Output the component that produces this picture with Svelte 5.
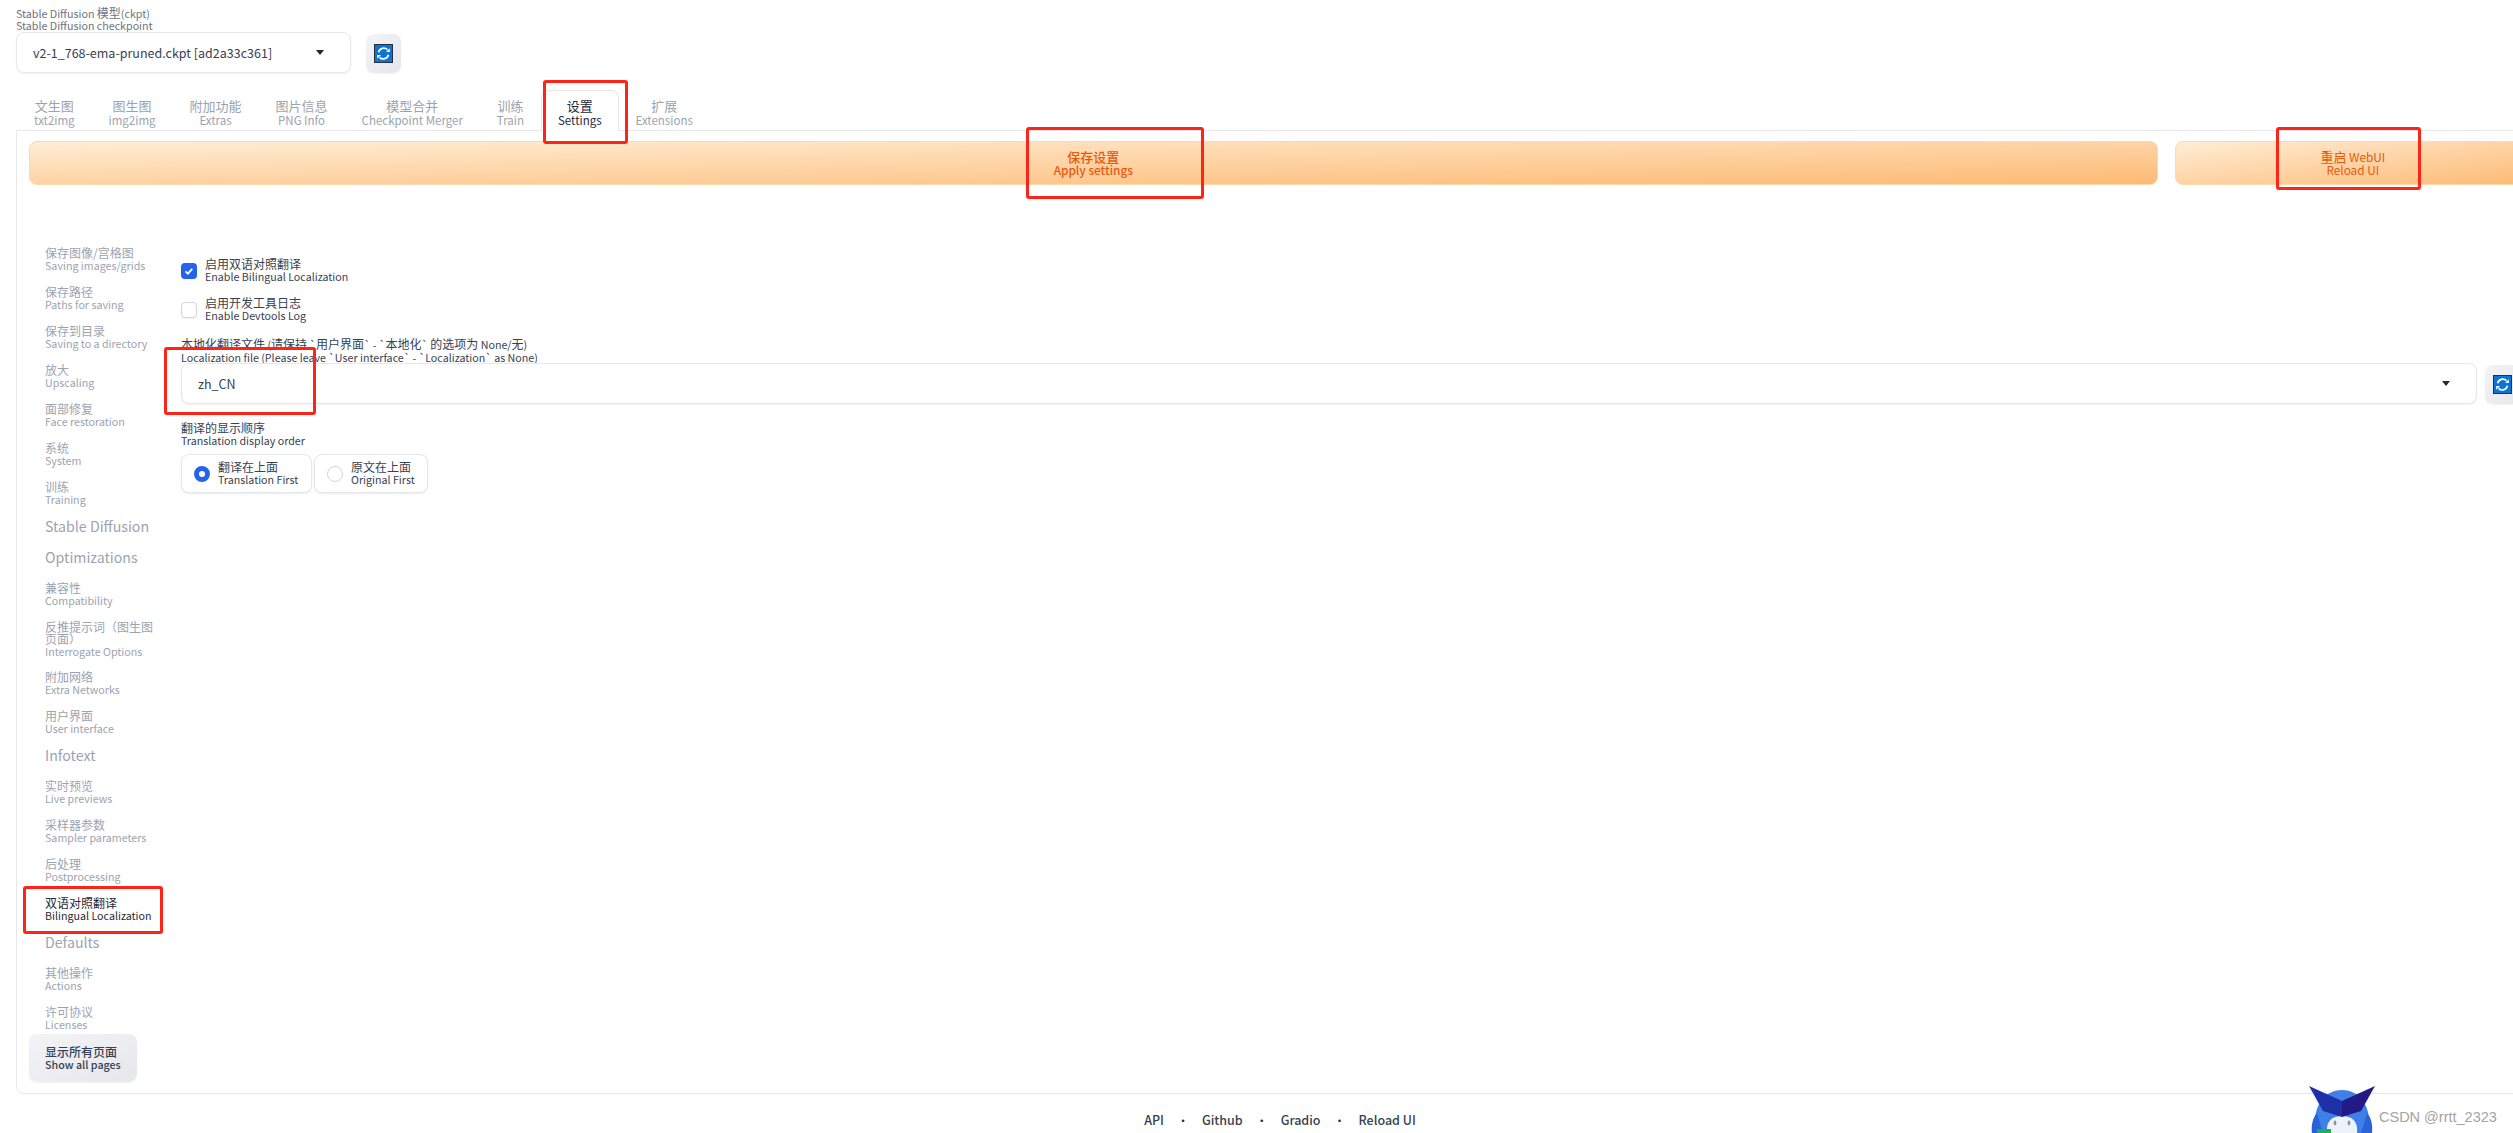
<script>
  const tabs = [
    ['文生图', 'txt2img'], ['图生图', 'img2img'], ['附加功能', 'Extras'], ['图片信息', 'PNG Info'],
    ['模型合并', 'Checkpoint Merger'], ['训练', 'Train'], ['设置', 'Settings', true], ['扩展', 'Extensions']
  ];
  const nav = [
    { zh: '保存图像/宫格图', en: 'Saving images/grids' },
    { zh: '保存路径', en: 'Paths for saving' },
    { zh: '保存到目录', en: 'Saving to a directory' },
    { zh: '放大', en: 'Upscaling' },
    { zh: '面部修复', en: 'Face restoration' },
    { zh: '系统', en: 'System' },
    { zh: '训练', en: 'Training' },
    { head: 'Stable Diffusion' },
    { head: 'Optimizations' },
    { zh: '兼容性', en: 'Compatibility' },
    { zh: '反推提示词（图生图页面）', en: 'Interrogate Options', tight: true },
    { zh: '附加网络', en: 'Extra Networks' },
    { zh: '用户界面', en: 'User interface' },
    { head: 'Infotext' },
    { zh: '实时预览', en: 'Live previews' },
    { zh: '采样器参数', en: 'Sampler parameters' },
    { zh: '后处理', en: 'Postprocessing' },
    { zh: '双语对照翻译', en: 'Bilingual Localization', active: true },
    { head: 'Defaults' },
    { zh: '其他操作', en: 'Actions' },
    { zh: '许可协议', en: 'Licenses' }
  ];
  const links = ['API', 'Github', 'Gradio', 'Reload UI'];
</script>

{#snippet refresh()}
  <button class="refresh" type="button" aria-label="refresh">
    <svg width="19" height="19" viewBox="0 0 19 19">
      <rect x="0.5" y="0.5" width="18" height="18" fill="#0a74d8" stroke="#2b2f36" />
      <path d="M4.6 8.2A5.2 5.2 0 0 1 13.4 5.7" fill="none" stroke="#fff" stroke-width="1.7" />
      <path d="M14.4 10.8A5.2 5.2 0 0 1 5.6 13.3" fill="none" stroke="#fff" stroke-width="1.7" />
      <path d="M12 8h3.8V4.2zM7 11H3.2v3.8z" fill="#fff" />
    </svg>
  </button>
{/snippet}

<div class="page">
  <div class="model">
    <div class="lbl top-lbl">
      <span>Stable Diffusion <b class="z">模型</b>(ckpt)</span>
      <span>Stable Diffusion checkpoint</span>
    </div>
    <div class="model-row">
      <div class="select small">
        <span>v2-1_768-ema-pruned.ckpt [ad2a33c361]</span>
        <i class="caret"></i>
      </div>
      {@render refresh()}
    </div>
  </div>

  <div class="tabs">
    {#each tabs as t}
      <div class="tab" class:on={t[2]}>
        <span class="z">{t[0]}</span>
        <span>{t[1]}</span>
      </div>
    {/each}
  </div>

  <div class="panel">
    <div class="actions">
      <button class="primary apply" type="button"><span class="z">保存设置</span><span>Apply settings</span></button>
      <button class="primary reload" type="button"><span><b class="z">重启</b> WebUI</span><span>Reload UI</span></button>
    </div>

    <div class="body">
      <aside class="side">
        {#each nav as n}
          {#if n.head}
            <div class="nav-head">{n.head}</div>
          {:else}
            <div class="nav-item" class:active={n.active} class:tight={n.tight}>
              <span class="z">{n.zh}</span>
              <span class="en">{n.en}</span>
            </div>
          {/if}
        {/each}
        <button class="show-all" type="button"><span class="z">显示所有页面</span><span>Show all pages</span></button>
      </aside>

      <section class="content">
        <div class="check-row">
          <span class="box checked">
            <svg width="16" height="16" viewBox="0 0 16 16"><path d="M4.5 8.3l2.4 2.3 4.4-4.8" fill="none" stroke="#fff" stroke-width="1.8" /></svg>
          </span>
          <div class="lbl"><span class="z">启用双语对照翻译</span><span>Enable Bilingual Localization</span></div>
        </div>
        <div class="check-row second">
          <span class="box"></span>
          <div class="lbl"><span class="z">启用开发工具日志</span><span>Enable Devtools Log</span></div>
        </div>

        <div class="lbl file-lbl">
          <span><b class="z">本地化翻译文件</b> (<b class="z">请保持</b> `<b class="z">用户界面</b>` - `<b class="z">本地化</b>` <b class="z">的选项为</b> None/<b class="z">无</b>)</span>
          <span>Localization file (Please leave `User interface` - `Localization` as None)</span>
        </div>
        <div class="file-row">
          <div class="select wide">
            <span>zh_CN</span>
            <i class="caret"></i>
          </div>
          {@render refresh()}
        </div>

        <div class="lbl order-lbl">
          <span class="z">翻译的显示顺序</span>
          <span>Translation display order</span>
        </div>
        <div class="radios">
          <div class="radio first">
            <span class="dot on"></span>
            <div class="lbl"><span class="z">翻译在上面</span><span>Translation First</span></div>
          </div>
          <div class="radio">
            <span class="dot"></span>
            <div class="lbl"><span class="z">原文在上面</span><span>Original First</span></div>
          </div>
        </div>
      </section>
    </div>
  </div>

  <footer class="footer">
    {#each links as l, i}
      {#if i > 0}<span class="sep">•</span>{/if}
      <span>{l}</span>
    {/each}
  </footer>

  <div class="red r-tab"></div>
  <div class="red r-apply"></div>
  <div class="red r-reload"></div>
  <div class="red r-file"></div>
  <div class="red r-nav"></div>

  <svg class="mascot" width="66" height="47" viewBox="0 0 66 47">
    <path d="M6 47V36C6 16 18 4 33 4s27 12 27 32v11z" fill="#3f7fe8" />
    <path d="M3 47c-1-8 1-16 5-20l6 20zM63 47c1-8-1-16-5-20l-6 20z" fill="#2a63d8" />
    <path d="M18 47c-1-8 2-17 15-17s16 9 15 17z" fill="#eef3fb" />
    <ellipse cx="26" cy="37" rx="1.4" ry="2.4" fill="#8b93a3" />
    <ellipse cx="40" cy="37" rx="1.4" ry="2.4" fill="#8b93a3" />
    <path d="M0 0L33 15V31L14 25z" fill="#1f2fa8" />
    <path d="M66 0L33 15V31L52 25z" fill="#241a86" />
    <rect x="8" y="43" width="14" height="4" fill="#16b35a" />
  </svg>
  <span class="mark">CSDN @rrtt_2323</span>
</div>

<style>
  :global(html), :global(body) {
    margin: 0;
    overflow: hidden;
    background: #fff;
  }
  .page {
    position: relative;
    box-sizing: border-box;
    width: 2560px;
    height: 1133px;
    padding: 7px 16px 0;
    font-family: "Noto Sans CJK SC", "Noto Sans", sans-serif;
    font-size: 10.7px;
    line-height: 12px;
    color: #374151;
    overflow: hidden;
  }
  .z {
    font-size: 12px;
    font-weight: inherit;
  }
  button {
    font-family: inherit;
    cursor: pointer;
  }
  .lbl {
    display: flex;
    flex-direction: column;
    gap: 1px;
    color: #374151;
    white-space: nowrap;
  }
  .top-lbl {
    color: #6b7280;
    gap: 0;
    height: 25px;
  }
  .model-row {
    display: flex;
    align-items: flex-start;
    gap: 15px;
  }
  .select {
    box-sizing: border-box;
    display: flex;
    align-items: center;
    justify-content: space-between;
    background: #fff;
    border: 1px solid #e5e7eb;
    border-radius: 8px;
    box-shadow: 0 1px 2px rgba(0, 0, 0, 0.06);
    font-size: 12.5px;
    color: #374151;
  }
  .small {
    width: 335px;
    height: 41px;
    padding: 0 26px 0 16px;
  }
  .caret {
    width: 0;
    height: 0;
    border-left: 4px solid transparent;
    border-right: 4px solid transparent;
    border-top: 5px solid #1f2937;
  }
  .refresh {
    box-sizing: border-box;
    display: flex;
    align-items: center;
    justify-content: center;
    flex: none;
    width: 35px;
    height: 39px;
    margin-top: 2px;
    padding: 0;
    border: 0;
    border-radius: 8px;
    background: linear-gradient(to bottom right, #f3f4f6, #e5e7eb);
    box-shadow: 0 1px 2px rgba(0, 0, 0, 0.05);
  }

  .tabs {
    display: flex;
    margin-top: 17px;
    padding-left: 1px;
    position: relative;
    z-index: 1;
  }
  .tab {
    box-sizing: border-box;
    display: flex;
    flex-direction: column;
    align-items: center;
    justify-content: center;
    gap: 2px;
    height: 41px;
    padding: 4px 16px 0;
    border: 1px solid transparent;
    border-bottom: 0;
    border-radius: 8px 8px 0 0;
    color: #9ca3af;
    font-size: 11.5px;
    white-space: nowrap;
  }
  .tab .z {
    font-size: 13px;
  }
  .tab.on {
    color: #1f2937;
    background: #fff;
    border-color: #e5e7eb;
  }

  .panel {
    box-sizing: border-box;
    height: 964px;
    margin-top: -1px;
    padding: 10px 12px 10px;
    border: 1px solid #e5e7eb;
    border-radius: 0 0 8px 8px;
  }
  .actions {
    display: flex;
    gap: 17px;
  }
  .primary {
    display: flex;
    flex-direction: column;
    align-items: center;
    justify-content: center;
    gap: 1px;
    height: 44px;
    padding: 0;
    border: 1px solid #fed7aa;
    border-radius: 8px;
    background: linear-gradient(to bottom right, #ffedd5, #fdba74);
    color: #ea580c;
    font-size: 11.8px;
    line-height: 12px;
  }
  .primary .z {
    font-size: 13px;
  }
  .apply {
    flex: 6;
    font-weight: 500;
  }
  .reload {
    flex: 1;
  }

  .body {
    display: flex;
    gap: 12px;
  }
  .side {
    box-sizing: border-box;
    flex: none;
    width: 140px;
    padding-top: 55px;
    display: flex;
    flex-direction: column;
  }
  .nav-item {
    display: flex;
    flex-direction: column;
    width: 116px;
    padding: 7px 0 7px 16px;
    color: #9ca3af;
  }
  .nav-item.tight {
    padding-bottom: 6px;
  }
  .nav-item .en {
    margin-top: 1px;
    white-space: nowrap;
  }
  .nav-item.active {
    color: #1f2937;
  }
  .nav-head {
    height: 26px;
    margin-bottom: 5px;
    padding-left: 16px;
    font-size: 14.2px;
    line-height: 26px;
    color: #9ca3af;
  }
  .show-all {
    display: flex;
    flex-direction: column;
    align-items: flex-start;
    justify-content: center;
    gap: 1px;
    box-sizing: border-box;
    width: 108px;
    height: 48px;
    margin-top: -4px;
    padding: 0 0 0 16px;
    border: 0;
    border-radius: 8px;
    background: linear-gradient(to bottom right, #f3f4f6, #e5e7eb);
    box-shadow: 0 1px 2px rgba(0, 0, 0, 0.05);
    color: #374151;
    font-size: 10.7px;
    line-height: 12px;
    font-weight: 500;
  }

  .content {
    flex: 1;
    min-width: 0;
    padding-top: 73px;
  }
  .check-row {
    display: flex;
    align-items: center;
    gap: 8px;
    height: 25px;
  }
  .check-row.second {
    margin-top: 14px;
  }
  .box {
    box-sizing: border-box;
    width: 16px;
    height: 16px;
    margin-top: 1px;
    border: 1px solid #d1d5db;
    border-radius: 4px;
    background: #fff;
    box-shadow: 0 1px 2px rgba(0, 0, 0, 0.05);
  }
  .box.checked {
    border: 0;
    background: #2563eb;
  }
  .box svg {
    display: block;
  }
  .file-lbl {
    margin-top: 16px;
    height: 25px;
  }
  .file-row {
    display: flex;
    gap: 8px;
    padding-right: 11px;
  }
  .wide {
    flex: 1;
    height: 41px;
    padding: 0 26px 0 16px;
  }
  .order-lbl {
    margin-top: 18px;
    height: 25px;
  }
  .radios {
    display: flex;
    gap: 2px;
    margin-top: 7px;
  }
  .radio {
    box-sizing: border-box;
    display: flex;
    align-items: center;
    gap: 8px;
    height: 39px;
    width: 114px;
    padding-left: 12px;
    border: 1px solid #e5e7eb;
    border-radius: 8px;
    background: #fff;
    box-shadow: 0 1px 2px rgba(0, 0, 0, 0.08);
  }
  .radio.first {
    width: 131px;
  }
  .dot {
    box-sizing: border-box;
    width: 16px;
    height: 16px;
    border: 1px solid #d1d5db;
    border-radius: 50%;
    background: #fff;
  }
  .dot.on {
    border: 5px solid #2563eb;
  }

  .footer {
    display: flex;
    justify-content: center;
    gap: 13.5px;
    margin-top: 19px;
    font-size: 12.5px;
    line-height: 14px;
    color: #374151;
    font-weight: 500;
  }
  .sep {
    font-size: 11px;
    color: #1f2937;
  }

  .red {
    position: absolute;
    box-sizing: border-box;
    border: 3px solid #ff2318;
    border-radius: 3px;
    pointer-events: none;
    z-index: 3;
  }
  .r-tab { left: 543px; top: 80px; width: 85px; height: 64px; }
  .r-apply { left: 1026px; top: 127px; width: 178px; height: 72px; }
  .r-reload { left: 2276px; top: 127px; width: 145px; height: 63px; }
  .r-file { left: 164px; top: 347px; width: 152px; height: 68px; }
  .r-nav { left: 23px; top: 886px; width: 140px; height: 48px; }

  .mascot {
    position: absolute;
    left: 2309px;
    top: 1086px;
    z-index: 4;
  }
  .mark {
    position: absolute;
    left: 2379px;
    top: 1109px;
    z-index: 4;
    font-family: "Liberation Sans", sans-serif;
    font-size: 14.5px;
    line-height: 16px;
    color: #a3a3a3;
    white-space: nowrap;
  }
</style>
